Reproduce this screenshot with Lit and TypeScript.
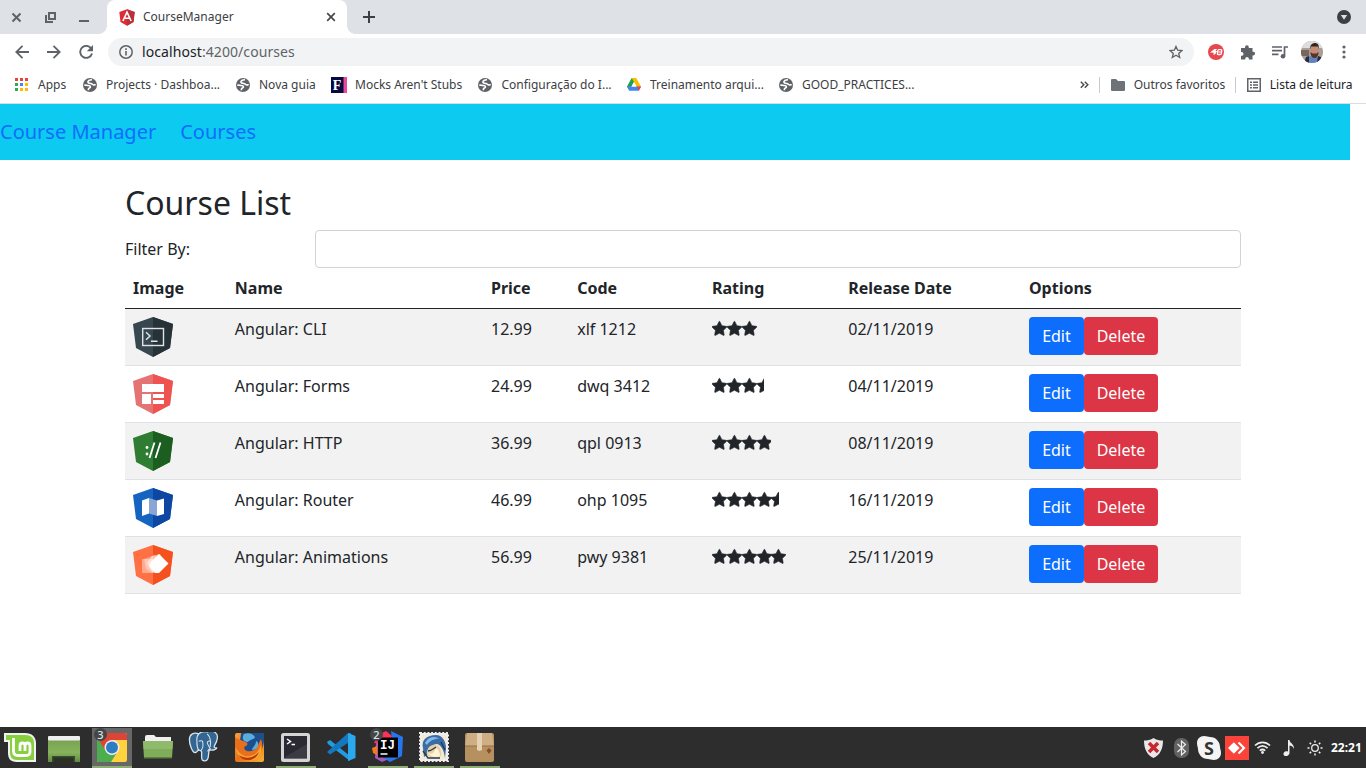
import { LitElement, html, css, svg } from "lit";
import { customElement } from "lit/decorators.js";

const icon = (w: number, h: number, box: string, body: unknown) =>
  html`<svg width=${w} height=${h} viewBox=${box} fill="none">${body}</svg>`;

/* ---------- browser icons ---------- */
const angular = icon(16, 17, "0 0 16 17", svg`
  <path d="M8 .2 15.7 3 14.5 13 8 16.7 1.5 13 .3 3Z" fill="#dd2c38"/>
  <path d="M8 .2 15.7 3 14.5 13 8 16.7Z" fill="#b9303a"/>
  <path d="M3.9 12 8 3.2 12.1 12M5.8 9.3H10.2" stroke="#fff" stroke-width="1.6"/>`);
const globe = icon(14, 14, "0 0 14 14", svg`
  <circle cx="7" cy="7" r="7" fill="#5f6368"/>
  <path d="M9 1.800C6.500 1.800 4.600 2.900 4.900 4.300c.3 1.200 1.800 1.100 3.100 1.200 1.300.1 1.300 1.200 2.400 1.400 1 .2 1.500-.2 2.300-.1M1.300 7.200c1.600-.2 2.500.3 3.700.3 1.800 0 2.500.5 2.400 1.600-.1 1-1.900.7-2 1.900v1.200" stroke="#fff" stroke-width="1.600"/>`);
const apps = icon(13, 13, "0 0 13 13", svg`
  ${["#ea4335", "#ea4335", "#ea4335", "#34a853", "#4285f4", "#fbbc04", "#34a853", "#fbbc04", "#fbbc04"].map(
    (c, i) => svg`<rect x=${(i % 3) * 5} y=${Math.floor(i / 3) * 5} width="3" height="3" fill=${c}/>`)}`);
const fowler = icon(16, 16, "0 0 16 16", svg`
  <rect width="16" height="16" fill="#090942"/><rect x="12.500" width="3.500" height="16" fill="#e84a9a"/>
  <text x="1.800" y="12.800" font-family="Liberation Serif, serif" font-weight="700" font-size="14" fill="#fff">F</text>`);
const drive = icon(14, 13, "0 0 14 13", svg`
  <path d="M4.700 0H9.200L4.500 8.500 2.300 12.500 0 8.500Z" fill="#1ea352"/>
  <path d="M4.700 0H9.200L14 8.500H9.600Z" fill="#fbbc04"/>
  <path d="M2.300 8.500H14L11.800 12.700H2.300L0 8.500Z" fill="#4285f4"/>
  <path d="M9.600 8.500H14L11.800 12.700Z" fill="#ea4335"/>
  <path d="M7 4.200 9.300 8.500H4.600Z" fill="#fff"/>`);

interface Bookmark { label: string; glyph: unknown; width: number; lead?: number; }
const bookmarks: Bookmark[] = [
  { label: "Apps", glyph: apps, width: 68 },
  { label: "Projects · Dashboa...", glyph: globe, width: 153 },
  { label: "Nova guia", glyph: globe, width: 95 },
  { label: "Mocks Aren't Stubs", glyph: fowler, width: 147, lead: 24 },
  { label: "Configuração do I...", glyph: globe, width: 149, lead: 23.5 },
  { label: "Treinamento arqui...", glyph: drive, width: 152 },
  { label: "GOOD_PRACTICES...", glyph: globe, width: 150 },
];

/* ---------- course shields ---------- */
const shield = (left: string, right: string, mark: unknown) => icon(40, 40, "0 0 40 40", svg`
  <path d="M20 0 40 7 37 31 20 40 3 31 0 7Z" fill=${left}/>
  <path d="M20 0 40 7 37 31 20 40Z" fill=${right}/>${mark}`);

interface Course { name: string; price: string; code: string; rating: number; date: string; image: unknown; }
const courses: Course[] = [
  { name: "Angular: CLI", price: "12.99", code: "xlf 1212", rating: 3, date: "02/11/2019",
    image: shield("#37474f", "#263238", svg`<rect x="9.700" y="11.500" width="20.800" height="17" stroke="#dfe3e5" stroke-width="1.400"/>
      <path d="M13 15.300 17 19 13 22.700M18 24.300h6.500" stroke="#dfe3e5" stroke-width="1.500"/>`) },
  { name: "Angular: Forms", price: "24.99", code: "dwq 3412", rating: 3.5, date: "04/11/2019",
    image: shield("#e57373", "#ef5350", svg`<path d="M9 10h22v8H9ZM9 20h9v10H9ZM20 20h11v4H20ZM20 26h11v4H20Z" fill="#fff"/>`) },
  { name: "Angular: HTTP", price: "36.99", code: "qpl 0913", rating: 4, date: "08/11/2019",
    image: shield("#2e7d32", "#1b5e20", svg`<circle cx="14" cy="16.500" r="1.400" fill="#fff"/><circle cx="14" cy="23" r="1.400" fill="#fff"/>
      <path d="m16.500 27 5-15.500M22.500 27l5-15.500" stroke="#fff" stroke-width="1.800"/>`) },
  { name: "Angular: Router", price: "46.99", code: "ohp 1095", rating: 4.5, date: "16/11/2019",
    image: shield("#1565c0", "#0d47a1", svg`<path d="M9 12.500 16 10V25.500L9 28ZM24 12.500 31 10.500V26L24 28Z" fill="#fff"/>
      <path d="m16 10 8 2.500V28L16 25.500Z" fill="#8ba5d5"/>`) },
  { name: "Angular: Animations", price: "56.99", code: "pwy 9381", rating: 5, date: "25/11/2019",
    image: shield("#ff7043", "#f4511e", svg`<rect x="9" y="14" width="14" height="14" fill="#fff" opacity=".4"/>
      <path d="M11 14 22 10 27 20 20 28 13 24Z" fill="#fff" opacity=".35"/>
      <path d="m14 18 5-7 8-2 4 9-7 9h-5Z" fill="#fff" opacity=".5"/>
      <path d="m26 9 9.500 9.500L26 28H22l-6-7 2-4Z" fill="#fff"/>`) },
];

const starPath = "M1664 647q0 22-26 48l-363 354 86 500q1 7 1 20 0 21-10.500 35.500t-30.500 14.500q-19 0-40-12l-449-236-449 236q-22 12-40 12-21 0-31.500-14.500t-10.500-35.500q0-6 2-20l86-500-364-354q-25-27-25-48 0-37 56-46l502-73 225-455q19-41 49-41t49 41l225 455 502 73q56 9 56 46z";

@customElement("star-rating")
class StarRating extends LitElement {
  static properties = { rating: { type: Number } };
  declare rating: number;
  static styles = css`
    :host { display: block; height: 24px; overflow: hidden; }
    .crop { overflow: hidden; height: 24px; display: flex; align-items: center; padding-bottom: 1px; box-sizing: border-box; }
    svg { flex: none; display: block; overflow: visible; }
  `;
  render() {
    return html`<div class="crop" style="width:${(this.rating * 74.4) / 5}px">
      ${[0, 1, 2, 3, 4].map(() => icon(14.86, 14.86, "0 0 1664 1664", svg`<path d=${starPath} fill="#212529" stroke="#212529" stroke-width="70"/>`))}
    </div>`;
  }
}

/* ---------- desktop panel ---------- */
const mint = icon(32, 30, "0 0 32 30", svg`
  <path d="M0 0H21C28 0 32 4 32 10V29H13C6 29 4 25 4 20V9H0Z" fill="#f2f2f2"/>
  <path d="M2 2H21C27 2 30 5 30 10V27H13C8 27 6 24 6 19V7H2Z" fill="#87cf3e"/>
  <path d="M9.500 5V18c0 3 1.500 4.500 4.500 4.500h8c3 0 4-1.500 4-4V13c0-4-5-4-5 0v5M21 13c0-4-5-4-5 0v5" stroke="#fff" stroke-width="2.800"/>`);
const desktop = icon(32, 26, "0 0 32 26", svg`
  <defs><linearGradient id="dg" x2="0" y2="1"><stop stop-color="#77a052"/><stop offset=".6" stop-color="#86b35c"/><stop offset="1" stop-color="#638a43"/></linearGradient></defs>
  <rect y="2" width="32" height="24" fill="url(#dg)"/><rect width="32" height="4.500" rx="1" fill="#eee"/>
  <path d="M4 20H27V26H4Z" fill="#3a4a30"/><path d="M5.500 21.500H25.500V26H5.500Z" fill="#29331f"/>`);
const chrome = icon(30, 29, "0 0 30 29", svg`
  <clipPath id="cc"><rect width="30" height="29" rx="2"/></clipPath>
  <g clip-path="url(#cc)"><rect width="30" height="29" fill="#ffd23e"/>
  <path d="M0 0V29H14L21 18 8 17Z" fill="#4cae4f"/><path d="M0 0H30V7H15L8 17 0 4Z" fill="#dd4337"/></g>
  <circle cx="15" cy="14.500" r="7.500" fill="#eee"/><circle cx="15" cy="14.500" r="6" fill="#2f7cc4"/>`);
const folder = icon(30, 24, "0 0 30 24", svg`
  <path d="M2 2Q2 0 4 0H11L13 2H28V10H2Z" fill="#efefef"/>
  <path d="M0 6H30L29 23H1Z" fill="#80ad59"/><path d="M0 6H30L29.500 14H.5Z" fill="#8fb96b"/><path d="M1 22H29V23.500H1Z" fill="#5c7f3d"/>`);
const postgres = icon(31, 31, "0 0 32 33", svg`
  <path d="M11 2C6 0 1 2 1 8c0 5 3 14 6 14 2 0 2-2 4-3 1 1 3 1 3 2v6c0 5 6 5 7 0l1-8c5 1 8-1 8-2-3 0-3-1-2-3 3-5 4-11 1-13-3-3-7-2-9-1-3-1-6-1-9 2Z" fill="#336791" stroke="#d6e2ec" stroke-width="1.400"/>
  <path d="M11 2c-3 3-2 6-2 9s0 6 2 9M20 2c4 4 4 9 3 14" stroke="#d6e2ec" stroke-width="1.200"/>
  <path d="M11 10c1-1 4-1 4 0 1 4 1 7-2 10M24 10c-2-1-4 0-4 1 0 3 3 5 3 8M21 21c-1-2 1-3 3-3" stroke="#d6e2ec" stroke-width="1.100"/>`);
const firefox = icon(29, 29, "0 0 29 29", svg`
  <defs><linearGradient id="fx" x2="1" y2="1"><stop stop-color="#f8a23c"/><stop offset=".5" stop-color="#e8701c"/><stop offset="1" stop-color="#f8b133"/></linearGradient></defs>
  <rect width="29" height="29" rx="2" fill="url(#fx)"/>
  <path d="M6 0H29V6C29 14 26 21 17 22 9 22 5 16 5 9 5 5 6 3 6 0Z" fill="#1d4f8c"/>
  <path d="M9 1c5-2 9 0 11 3-1 3-5 2-7 5-4 0-7-3-4-8ZM21 8c3 1 3 5 1 8l-5 1c0-3 4-4 4-9Z" fill="#5aaede"/>
  <path d="M0 4C3 7 5 6 8 8c4 1 6 3 3 5-3 1-2 4 1 5 5 1 10-1 12-8l2-4c4 9-2 20-12 20C5 26-2 17 0 4Z" fill="#e8701c"/>
  <path d="M1 15c4 7 9 9 14 8 6-1 9-5 11-11 2 8-3 16-12 16C7 27 1 22 1 15Z" fill="#f9a52f"/>
  <path d="M4 22c6 4 14 4 20-3-3 7-8 9-13 8-3 0-6-3-7-5Z" fill="#b9380c"/>`);
const terminal = icon(29, 29, "0 0 29 29", svg`
  <rect width="29" height="29" rx="2.500" fill="#d4d4d4"/><rect x="3" y="3" width="23" height="22.500" fill="#2b2933"/>
  <path d="M4 24 26 11V25.500H4Z" fill="#45434d" opacity=".65"/>
  <path d="m6 6 3.500 2.500L6 11M10.500 11.500H14" stroke="#fff" stroke-width="1.500"/>`);
const vscode = icon(29, 28, "0 0 29 28", svg`
  <path d="M0 9 3 7 23 23V28L1 11Z" fill="#239be0"/><path d="M0 19 21 0H24V8L3 21.500Z" fill="#1378bd"/>
  <path d="M21 0 28.500 3V25L21 28Z" fill="#2aa9ee"/>`);
const idea = icon(32, 32, "0 0 32 32", svg`
  <path d="M4 12 16 2 26 24 10 31 3 27Z" fill="#a35bb8"/><path d="M6 4 14 0 20 5 18 14 2 12Z" fill="#fe315d"/>
  <path d="m0 17 5-2v9L1 22Z" fill="#f97a12"/><path d="m19 0 12 6-1 19-12 6-9-6 12-7Z" fill="#2876ed"/>
  <rect x="6" y="6.500" width="20" height="20" fill="#000"/>
  <text x="8" y="17.500" font-family="Liberation Mono, monospace" font-size="12.500" font-weight="700" fill="#fff">IJ</text>
  <path d="M8.500 23h7" stroke="#fff" stroke-width="1.500"/>`);
const thunderbird = icon(30, 30, "0 0 30 30", svg`
  <rect x="1" y="1" width="28" height="28" fill="#eee" stroke="#eee" stroke-width="2" stroke-dasharray="2 1.700"/>
  <rect x="3" y="3" width="24" height="24" fill="#f3ead0"/>
  <path d="M4 16C2 8 8 3 17 3c6 0 10 6 10 13l-1 10c-1-8-4-13-8-14-5 0-8 5-9 10L5 25Z" fill="#3a6ca8"/>
  <path d="M6 11c3-6 9-8 15-4-4-1-10 1-13 6Z" fill="#86b9e8"/>
  <path d="M8 23c-1-7 4-11 9-10 4 1 6 6 5 11-5 3-10 2-14-1Z" fill="#e9cfa3"/>
  <path d="M9 21c4 2 6 0 8-5 2 1 4 4 4 8-4 2-9 1-12-3Z" fill="#fff4d8"/>
  <path d="m4 19 5 7h12M9 19c3 0 5-2 8-4M22 10l4 8" stroke="#25394f" stroke-width="1.300"/>`);
const box = icon(29, 29, "0 0 29 29", svg`
  <rect width="29" height="29" rx="2" fill="#b7905f"/><path d="M2 0H27L29 13H0Z" fill="#cfae83"/>
  <path d="M0 13H29" stroke="#957047"/><path d="M12 0h5v17l-2.500 1L12 17Z" fill="#e4d2b3"/>
  <path d="m24 15 2.500 2.500L24 21l-2.500-3.500Z" fill="#80502b"/>`);

interface Launcher { glyph: unknown; open?: boolean; active?: boolean; badge?: string; }
const launchers: Launcher[] = [
  { glyph: chrome, open: true, active: true, badge: "3" },
  { glyph: folder }, { glyph: postgres }, { glyph: firefox }, { glyph: terminal, open: true },
  { glyph: vscode }, { glyph: idea, open: true, badge: "2" }, { glyph: thunderbird, open: true }, { glyph: box, open: true },
];

const tray = [
  { w: 28, glyph: icon(19, 20, "0 0 19 20", svg`<path d="M9.500 0C12 2 16 2.500 19 2.500 19 11 16 17 9.500 20 3 17 0 11 0 2.500 3 2.500 7 2 9.500 0Z" fill="#e8e8e8"/>
    <path d="m5 5 9 9m0-9-9 9" stroke="#c6282d" stroke-width="3.500"/>`) },
  { w: 28, glyph: icon(15, 20, "0 0 15 20", svg`<rect width="15" height="20" rx="7" fill="#626262"/>
    <path d="m3.500 6 8 7.500-4 3.500V3l4 3.500-8 7.500" stroke="#eee" stroke-width="1.200"/>`) },
  { w: 28, glyph: icon(24, 24, "0 0 24 24", svg`<path d="M7 0c3 0 4 1 6 1 6 0 10 5 10 10 0 2 1 3 1 6 0 4-3 7-7 7-3 0-4-1-6-1C5 23 1 18 1 13c0-2-1-3-1-6 0-4 3-7 7-7Z" fill="#f4f4f4"/>
    <text x="12" y="18.500" text-anchor="middle" font-family="Open Sans, sans-serif" font-size="18" font-weight="700" fill="#333">S</text>`) },
  { w: 28, glyph: icon(24, 24, "0 0 24 24", svg`<rect width="24" height="24" fill="#fb4339"/>
    <path d="m8.800 6.200 5.800 5.800-5.800 5.800L3 12Z" fill="#fff"/><path d="m13.500 6.500 5.500 5.500-5.500 5.500" stroke="#fff" stroke-width="2.200"/>`) },
  { w: 23, glyph: icon(17, 13, "0 0 17 13", svg`<path d="M1 4.500C5.500.3 11.500.3 16 4.500M3.400 7.200c3.200-2.900 7-2.900 10.200 0M5.800 9.700c1.700-1.500 3.700-1.500 5.400 0" stroke="#eee" stroke-width="1.700"/><circle cx="8.500" cy="11.500" r="1.400" fill="#eee"/>`) },
  { w: 29, glyph: icon(12, 16, "0 0 12 16", svg`<path d="M5 0h1.500c0 3 5 4 4.500 9-1-3-3-3.500-4.500-3.500V13C6 17 0 17 .5 13.500 1 11 4 11 5 11.500Z" fill="#eee"/>`) },
  { w: 24, glyph: icon(16, 16, "0 0 16 16", svg`<circle cx="8" cy="8" r="3.300" stroke="#eee" stroke-width="1.300"/>
    <path d="M8 .5v2M8 13.500v2M.5 8h2M13.500 8h2M2.700 2.700l1.400 1.400m7.800 7.800 1.400 1.400m0-10.600-1.400 1.400M4.100 11.900l-1.400 1.400" stroke="#eee" stroke-width="1.500"/>`) },
];

@customElement("app-root")
class AppRoot extends LitElement {
  static styles = css`
    :host { display: flex; flex-direction: column; width: 1366px; height: 768px; overflow: hidden;
      background: #fff; font-family: "Noto Sans", sans-serif; color: #212529; }
    * { box-sizing: border-box; }
    svg { display: block; flex: none; }
    .tabs { display: flex; height: 34px; background: #dee1e6; flex: none; }
    .window { display: flex; width: 107px; align-items: center; padding: 0 0 0 11px; gap: 23px; }
    .tab { display: flex; align-items: center; width: 240px; background: #fff; border-radius: 8px 8px 0 0;
      padding: 0 11px 0 12px; font-size: 12px; color: #3c4043; position: relative; }
    .tab::before, .tab::after { content: ""; position: absolute; bottom: 0; width: 8px; height: 8px; }
    .tab::before { left: -8px; background: radial-gradient(circle at 0 0, transparent 7.5px, #fff 8px); }
    .tab::after { right: -8px; background: radial-gradient(circle at 100% 0, transparent 7.5px, #fff 8px); }
    .tab span { flex: 1; margin-left: 8px; padding-bottom: 2px; }
    .plus { display: flex; align-items: center; margin-left: 16px; flex: 1; }
    .drop { display: flex; align-items: center; margin-right: 15px; }
    .toolbar { display: flex; align-items: center; height: 36px; flex: none; }
    .arrows { display: flex; align-items: center; gap: 18px; width: 108px; padding-left: 15px; }
    .omnibox { display: flex; align-items: center; width: 1086px; height: 28px; border-radius: 14px; background: #f1f3f4;
      padding: 0 11px; font-size: 14px; color: #5f6368; }
    .omnibox p { flex: 1; margin: 0 0 0 9px; line-height: 20px; letter-spacing: 0.08px; }
    .omnibox b { font-weight: 400; color: #202124; }
    .extensions { display: flex; align-items: center; flex: 1; padding-left: 14px; }
    .slot { display: flex; justify-content: center; width: 32px; flex: none; }
    .bookmarks { display: flex; align-items: center; height: 34px; flex: none; padding: 0 13.5px 4px 15px;
      border-bottom: 1px solid #dadce0; font-size: 12px; color: #3c4043; white-space: nowrap; }
    .bookmark { display: flex; align-items: center; flex: none; }
    .more { flex: 1; display: flex; justify-content: flex-end; align-items: center; }
    .rule { width: 1px; height: 16px; background: #c8cbcf; margin: 0 11px 0 10px; }
    .page { flex: 1; min-height: 0; }
    .navbar { display: flex; align-items: center; gap: 24px; width: 1350px; height: 56px; background: #0dcaf0;
      font-size: 20px; color: #0d6efd; line-height: 30px; }
    .container { width: 1116px; margin: 24px 0 0 125px; font-size: 16px; line-height: 24px; }
    h2 { font-size: 32px; line-height: 38.4px; font-weight: 400; margin: 0 0 8px; }
    .filter { display: grid; grid-template-columns: 190px 1fr; align-items: center; margin-top: -0.4px; }
    .input { height: 38px; border: 1px solid #ced4da; border-radius: 4px; }
    .row { display: grid; grid-template-columns: 101.8px 256.2px 86.2px 134.8px 136.3px 180.7px 220px; border-bottom: 1px solid #dee2e6; }
    .row > * { padding: 8px; }
    .row:nth-child(even) { background: #f2f2f2; }
    .head { font-weight: 700; border-bottom-color: #212529; }
    .options { display: flex; align-items: flex-start; }
    .btn { display: block; font: inherit; color: #fff; border: 0; border-radius: 4px; height: 38px; padding: 0; text-align: center; }
    .edit { width: 55px; background: #0d6efd; }
    .delete { width: 74px; background: #dc3545; }
    .panel { display: flex; height: 41px; background: #2d2d2d; flex: none; color: #fff; }
    .menu { width: 40px; display: flex; align-items: center; justify-content: center; }
    .show { width: 52px; display: flex; align-items: center; justify-content: center; padding: 2px 4px 0 0; }
    .launchers { display: flex; gap: 6px; flex: 1; }
    .launcher { display: flex; align-items: center; justify-content: center; width: 40px; margin-top: 1px; height: 40px; border-bottom: 2px solid transparent;
      padding-right: 1px; position: relative; }
    .open { border-color: #8fab76; }
    .active { background: #676767; }
    .badge { position: absolute; left: 2px; top: 0; width: 13px; height: 13px; border-radius: 50%; background: #454545; color: #d5e4f2;
      font-size: 11px; font-weight: 500; line-height: 13px; text-align: center; }
    .tray { display: flex; align-items: center; }
    .traycell { display: flex; justify-content: center; }
    .clock { font: 700 12px "Noto Sans", sans-serif; width: 39px; padding-left: 4px; }
  `;

  render() {
    return html`
      <div class="tabs">
        <div class="window">
          ${icon(11, 11, "0 0 11 11", svg`<path d="m1.500 1.500 8 8m0-8-8 8" stroke="#5f6368" stroke-width="2"/>`)}
          ${icon(11, 11, "0 0 11 11", svg`<path d="M4 1h6v6H4ZM1 3v7h7" stroke="#5f6368" stroke-width="2"/>`)}
          ${icon(10, 10, "0 0 10 10", svg`<path d="M0 9h10" stroke="#5f6368" stroke-width="2"/>`)}
        </div>
        <div class="tab">${angular}<span>CourseManager</span>
          ${icon(10, 10, "0 0 10 10", svg`<path d="m1.200 1.200 7.600 7.600m0-7.600-7.600 7.600" stroke="#45494d" stroke-width="1.700"/>`)}</div>
        <div class="plus">${icon(12, 12, "0 0 12 12", svg`<path d="M6 0v12M0 6h12" stroke="#3c4043" stroke-width="2"/>`)}</div>
        <div class="drop">${icon(14, 14, "0 0 14 14", svg`<circle cx="7" cy="7" r="7" fill="#3c4043"/><path d="M3.800 5h6.400L7 9.800Z" fill="#dee1e6"/>`)}</div>
      </div>
      <div class="toolbar">
        <div class="arrows">
          ${icon(14, 14, "0 0 14 14", svg`<path d="M14 7H1.500M7.500.8 1.300 7l6.200 6.200" stroke="#5f6368" stroke-width="1.800"/>`)}
          ${icon(14, 14, "0 0 14 14", svg`<path d="M0 7h12.500M6.500.8 12.700 7l-6.200 6.200" stroke="#5f6368" stroke-width="1.800"/>`)}
          ${icon(14, 14, "0 0 14 14", svg`<path d="M12.200 3.500A6 6 0 1 0 13 8.500" stroke="#5f6368" stroke-width="1.900"/><path d="M14 0v6.200H7.800Z" fill="#5f6368"/>`)}
        </div>
        <div class="omnibox">
          ${icon(14, 14, "0 0 14 14", svg`<circle cx="7" cy="7" r="6.200" stroke="#5f6368" stroke-width="1.500"/><path d="M7 6v4.500M7 3.300v1.600" stroke="#5f6368" stroke-width="1.600"/>`)}
          <p><b>localhost</b>:4200/courses</p>
          ${icon(14, 14, "0 0 14 14", svg`<path d="m7 1.400 1.700 3.800 4.200.4-3.200 2.800 1 4.100L7 10.300l-3.700 2.200 1-4.100L1.100 5.600l4.200-.4Z" stroke="#5f6368" stroke-width="1.300"/>`)}
        </div>
        <div class="extensions">
          <div class="slot" style="width:16px">${icon(16, 16, "0 0 16 16", svg`<circle cx="8" cy="8" r="8" fill="#e5484d"/>
            <path d="M2 8.500 6.500 5H9L7.500 7H9L7 10.500H5L6 8.700Z" fill="#fff"/><rect x="9.700" y="5.700" width="4" height="4.800" rx="1" stroke="#fff" stroke-width="1.300" transform="skewX(-8) translate(1 0)"/><path d="M10 8h4" stroke="#fff"/>`)}</div>
          <div class="slot" style="width:47px">${icon(15, 15, "0 0 15 15", svg`<path d="M1 3h4V2.200a1.900 1.900 0 0 1 3.800 0V3h3.700v3.700h.7a1.800 1.800 0 0 1 0 3.700h-.7V14.500H8.900v-.7a1.800 1.800 0 0 0-3.700 0v.7H1V10.800h.6a1.900 1.900 0 0 0 0-3.800H1Z" fill="#5f6368"/>`)}</div>
          <div class="slot" style="width:17px">${icon(16, 13, "0 0 16 13", svg`<path d="M0 1h10M0 4.700h10M0 8.400h6.500M12.500 10V1H16" stroke="#5f6368" stroke-width="1.700"/><circle cx="11" cy="10.300" r="2.300" fill="#5f6368"/>`)}</div>
          <div class="slot" style="width:48px">${icon(22, 22, "0 0 22 22", svg`
            <clipPath id="av"><circle cx="11" cy="11" r="11"/></clipPath>
            <g clip-path="url(#av)"><rect width="22" height="22" fill="#a99d94"/><rect width="22" height="7" fill="#dcdddf"/>
            <path d="M0 9h8v6H0Z" fill="#75675d"/><path d="m3 22 3-6 5-1 6 1 3 6Z" fill="#6382c1"/>
            <path d="M5 16 8 15v7H3ZM17 15l3 1v5h-4Z" fill="#272d3b"/>
            <ellipse cx="13.500" cy="10" rx="4" ry="6" fill="#c58d76"/><path d="M9.500 8c-1-4 2-6 4.500-6s4.500 2 3.500 6l-1-2.500h-6Z" fill="#35251f"/>
            <path d="M9.500 11c0 8 8 8 8 0l-2 1.500h-4Z" fill="#553529"/></g>`)}</div>
          <div class="slot" style="width:16px">${icon(4, 14, "0 0 4 14", svg`<circle cx="2" cy="2" r="1.600" fill="#5f6368"/><circle cx="2" cy="7" r="1.600" fill="#5f6368"/><circle cx="2" cy="12" r="1.600" fill="#5f6368"/>`)}</div>
        </div>
      </div>
      <div class="bookmarks">
        ${bookmarks.map((b) => html`<div class="bookmark" style="width:${b.width}px"><div style="width:${b.lead ?? 23}px">${b.glyph}</div><span>${b.label}</span></div>`)}
        <div class="more">
          ${icon(9, 8, "0 0 9 8", svg`<path d="m.8.8 3 3-3 3m4-6 3 3-3 3" stroke="#4c5054" stroke-width="1.500"/>`)}
          <div class="rule"></div>
          ${icon(14, 12, "0 0 14 12", svg`<path d="M0 1Q0 0 1 0h4l2 2h6q1 0 1 1v8q0 1-1 1H1q-1 0-1-1Z" fill="#6e7377"/>`)}
          <span style="margin-left:8.5px">Outros favoritos</span>
          <div class="rule"></div>
          ${icon(14, 14, "0 0 14 14", svg`<rect x=".75" y=".75" width="12.500" height="12.500" stroke="#5f6368" stroke-width="1.500"/><path d="M3 4.200h2M6 4.200h5M3 7h2M6 7h5M3 9.800h2M6 9.800h5" stroke="#5f6368" stroke-width="1.400"/>`)}
          <span style="margin-left:8.5px;color:#202124">Lista de leitura</span>
        </div>
      </div>
      <div class="page">
        <div class="navbar"><span>Course Manager</span><span>Courses</span></div>
        <div class="container">
          <h2>Course List</h2>
          <div class="filter"><span>Filter By:</span><div class="input"></div></div>
          <div class="table">
            <div class="row head">
              <div>Image</div><div>Name</div><div>Price</div><div>Code</div><div>Rating</div><div>Release Date</div><div>Options</div>
            </div>
            ${courses.map((c) => html`<div class="row">
              <div>${c.image}</div><div>${c.name}</div><div>${c.price}</div><div>${c.code}</div>
              <div><star-rating .rating=${c.rating}></star-rating></div><div>${c.date}</div>
              <div class="options"><button class="btn edit">Edit</button><button class="btn delete">Delete</button></div>
            </div>`)}
          </div>
        </div>
      </div>
      <div class="panel">
        <div class="menu">${mint}</div>
        <div class="show">${desktop}</div>
        <div class="launchers">
          ${launchers.map((l) => html`<div class="launcher ${l.open ? "open" : ""} ${l.active ? "active" : ""}">${l.glyph}${l.badge ? html`<span class="badge">${l.badge}</span>` : ""}</div>`)}
        </div>
        <div class="tray">
          ${tray.map((t) => html`<div class="traycell" style="width:${t.w}px">${t.glyph}</div>`)}
          <span class="clock">22:21</span>
        </div>
      </div>`;
  }
}
